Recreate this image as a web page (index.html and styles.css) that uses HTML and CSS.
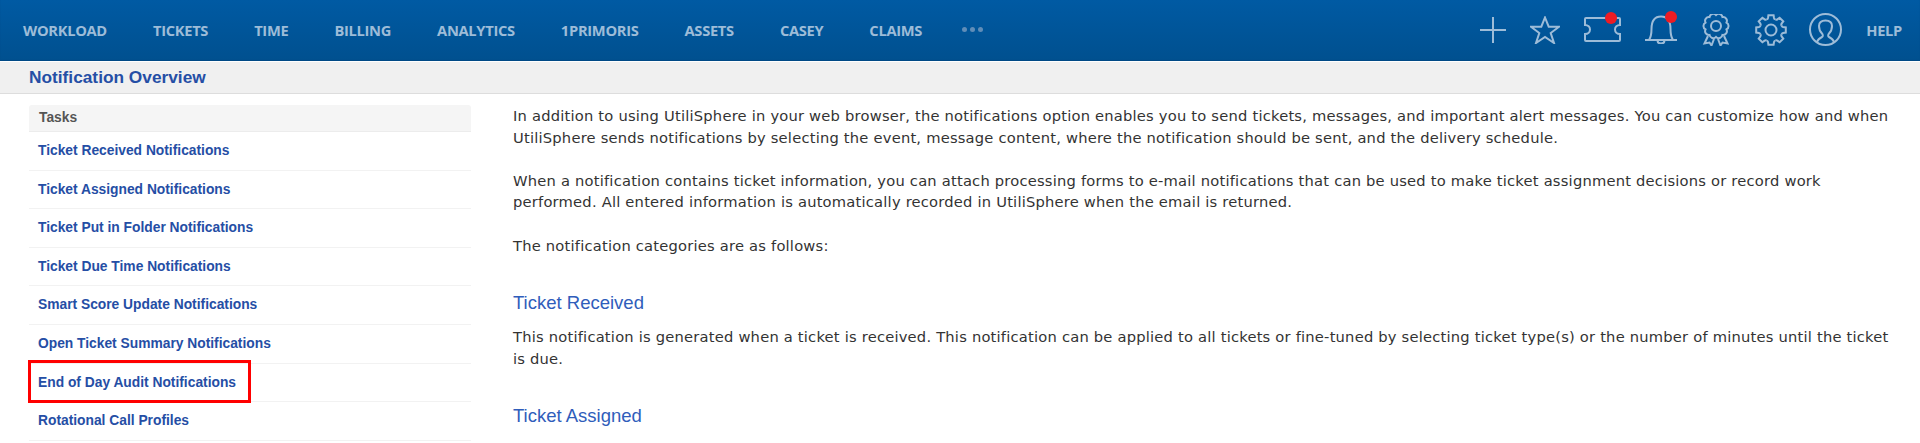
FILE: index.html
```html
<!DOCTYPE html>
<html lang="en">
<head>
    <meta charset="UTF-8">
    <title>Notification Overview</title>
    <link rel="stylesheet" href="styles.css">
</head>
<body>
    <header class="topbar">
        <nav class="mainnav">
            <a href="#">WORKLOAD</a>
            <a href="#">TICKETS</a>
            <a href="#">TIME</a>
            <a href="#">BILLING</a>
            <a href="#">ANALYTICS</a>
            <a href="#">1PRIMORIS</a>
            <a href="#">ASSETS</a>
            <a href="#">CASEY</a>
            <a href="#">CLAIMS</a>
            <span class="more"><i></i><i></i><i></i></span>
        </nav>
        <div class="tools">
            <svg class="icon" width="26" height="26" viewBox="0 0 26 26"><path d="M13 0v26M0 13h26"/></svg>
            <svg class="icon" width="30" height="28" viewBox="0 0 30 28"><path d="M15 1.500l3.700 9.200h10.300l-8.300 6.300 3.300 10-9-6-9 6 3.300-10-8.300-6.300h10.300z"/></svg>
            <span class="alert">
                <svg class="icon" width="37" height="25" viewBox="0 0 37 25"><path d="M2 1h33a1 1 0 0 1 1 1v6c-3 0-5 2-5 4.500s2 4.500 5 4.500v6a1 1 0 0 1-1 1h-33a1 1 0 0 1-1-1v-6c3 0 5-2 5-4.500s-2-4.500-5-4.500v-6a1 1 0 0 1 1-1z"/></svg>
                <b class="dot dot-ticket"></b>
            </span>
            <span class="alert">
                <svg class="icon" width="32" height="29" viewBox="0 0 32 29"><path d="M0 25h32M4 25c2-3 2.500-5 2.500-11 0-8 3.500-12.500 9.500-12.500s9.500 4.500 9.500 12.500c0 6 .5 8 2.500 11M12.500 25.500c0 4 7 4 7 0"/></svg>
                <b class="dot dot-bell"></b>
            </span>
            <svg class="icon" width="30" height="32" viewBox="0 0 30 32"><circle cx="15" cy="12" r="5"/><path d="M15 1a3.800 3.800 0 0 1 6.470 2.100a3.800 3.800 0 0 1 3.990 5.500a3.800 3.800 0 0 1 0 6.800a3.800 3.800 0 0 1-3.990 5.500a3.800 3.800 0 0 1-6.470 2.100a3.800 3.800 0 0 1-6.470-2.100a3.800 3.800 0 0 1-3.990-5.500a3.800 3.800 0 0 1 0-6.800a3.800 3.800 0 0 1 3.990-5.500a3.800 3.800 0 0 1 6.470-2.100z"/><path d="M7 22l-3.500 7.500 5-1 2 3 2.500-6.500M23 22l3.500 7.500-5-1-2 3-2.500-6.500"/></svg>
            <svg class="icon" width="32" height="32" viewBox="0 0 32 32">
                <defs><path id="tooth" d="M11.600 5.400q1.200-.3 1.400-1.400l.4-2.800h5.200l.4 2.800q.2 1.100 1.400 1.400"/></defs>
                <circle cx="16" cy="16" r="5.500"/>
                <use href="#tooth"/>
                <use href="#tooth" transform="rotate(45 16 16)"/>
                <use href="#tooth" transform="rotate(90 16 16)"/>
                <use href="#tooth" transform="rotate(135 16 16)"/>
                <use href="#tooth" transform="rotate(180 16 16)"/>
                <use href="#tooth" transform="rotate(225 16 16)"/>
                <use href="#tooth" transform="rotate(270 16 16)"/>
                <use href="#tooth" transform="rotate(315 16 16)"/>
            </svg>
            <svg class="icon icon-user" width="33" height="33" viewBox="0 0 33 33"><circle cx="16.500" cy="16.500" r="15.500"/><path d="M8 29c1-3 3-4 5-5 1.200-.5 1-2.500 0-3.500-2-2-3-4.500-3-7.500 0-4 2.500-5.500 6.500-5.500s6.500 1.500 6.500 5.500c0 3-1 5.500-3 7.500-1 1-1.200 3 0 3.500 2 1 4 2 5 5"/></svg>
            <a class="help" href="#">HELP</a>
        </div>
    </header>

    <div class="pagetitle">Notification Overview</div>

    <div class="layout">
        <aside class="tasks">
            <div class="tasks-head">Tasks</div>
            <a href="#">Ticket Received Notifications</a>
            <a href="#">Ticket Assigned Notifications</a>
            <a href="#">Ticket Put in Folder Notifications</a>
            <a href="#">Ticket Due Time Notifications</a>
            <a href="#">Smart Score Update Notifications</a>
            <a href="#">Open Ticket Summary Notifications</a>
            <a href="#" class="marked">End of Day Audit Notifications</a>
            <a href="#">Rotational Call Profiles</a>
        </aside>

        <main class="content">
            <p>In addition to using UtiliSphere in your web browser, the notifications option enables you to send tickets, messages, and important alert messages. You can customize how and when UtiliSphere sends notifications by selecting the event, message content, where the notification should be sent, and the delivery schedule.</p>
            <p>When a notification contains ticket information, you can attach processing forms to e-mail notifications that can be used to make ticket assignment decisions or record work performed. All entered information is automatically recorded in UtiliSphere when the email is returned.</p>
            <p>The notification categories are as follows:</p>
            <h2>Ticket Received</h2>
            <p>This notification is generated when a ticket is received. This notification can be applied to all tickets or fine-tuned by selecting ticket type(s) or the number of minutes until the ticket is due.</p>
            <h2>Ticket Assigned</h2>
        </main>
    </div>
</body>
</html>
```

FILE: styles.css
```css
html, body {
    height: 100%;
}

body {
    margin: 0;
    background: #fff;
    color: #333;
    font-family: "DejaVu Sans", sans-serif;
    font-size: 14.700px;
    letter-spacing: .21px;
    overflow: hidden;
}

a {
    text-decoration: none;
}

.topbar {
    height: 59px;
    padding-bottom: 2px;
    display: flex;
    align-items: center;
    justify-content: space-between;
    background: linear-gradient(#005aa3, #00508f);
    box-shadow: inset 0 -1px 1px #004a85;
}

.mainnav {
    display: flex;
    align-items: center;
    gap: 46px;
    padding-left: 23px;
}

.mainnav a,
.help {
    color: #9dbcd8;
    font-family: "Open Sans", sans-serif;
    font-size: 14.700px;
    font-weight: 700;
    letter-spacing: -.3px;
}

.more {
    display: flex;
    gap: 3px;
    margin-left: -6px;
}

.more i {
    width: 5px;
    height: 5px;
    border-radius: 50%;
    background: #5f8db8;
}

.tools {
    display: flex;
    align-items: center;
    gap: 24px;
    padding-right: 18px;
}

.icon {
    display: block;
    fill: none;
    stroke: #9dbcd8;
    stroke-width: 2;
}

.icon-user {
    margin-left: -2px;
}

.alert {
    position: relative;
    display: block;
}

.dot {
    position: absolute;
    width: 12px;
    height: 12px;
    border-radius: 50%;
    background: #ed1c24;
}

.dot-ticket {
    top: -5px;
    left: 21px;
}

.dot-bell {
    top: -4px;
    left: 20px;
}

.pagetitle {
    height: 31px;
    margin-top: 1px;
    padding-left: 29px;
    background: #f0f0f0;
    border-bottom: 1px solid #ddd;
    color: #254ea5;
    font-family: "Liberation Sans", sans-serif;
    font-size: 17.300px;
    font-weight: 700;
    letter-spacing: 0;
    line-height: 30px;
}

.layout {
    display: flex;
    align-items: flex-start;
    gap: 42px;
    padding: 11px 0 0 29px;
}

.tasks {
    flex: 0 0 442px;
    font-family: "Liberation Sans", sans-serif;
    font-size: 13.800px;
    font-weight: 700;
    letter-spacing: 0;
}

.tasks-head {
    height: 26px;
    padding-left: 10px;
    background: #f5f5f5;
    border-bottom: 1px solid #ececec;
    border-radius: 3px 3px 0 0;
    color: #555;
    line-height: 25px;
}

.tasks a {
    display: block;
    height: 37.600px;
    padding-left: 9px;
    border-bottom: 1px solid #f2f2f2;
    color: #254ea5;
    line-height: 37.600px;
}

.tasks a.marked {
    position: relative;
}

.tasks a.marked::after {
    content: "";
    position: absolute;
    top: -4px;
    left: -1px;
    width: 223px;
    height: 43px;
    border: 3px solid #f00;
    box-sizing: border-box;
}

.content {
    flex: 1;
    padding-right: 25px;
    line-height: 21.600px;
}

.content p {
    margin: 0 0 21.600px;
}

.content h2 {
    margin: 34.500px 0 11.500px;
    color: #2f5dbb;
    font-family: "Liberation Sans", sans-serif;
    font-size: 18.500px;
    font-weight: 400;
    letter-spacing: 0;
    line-height: 24px;
}
```
